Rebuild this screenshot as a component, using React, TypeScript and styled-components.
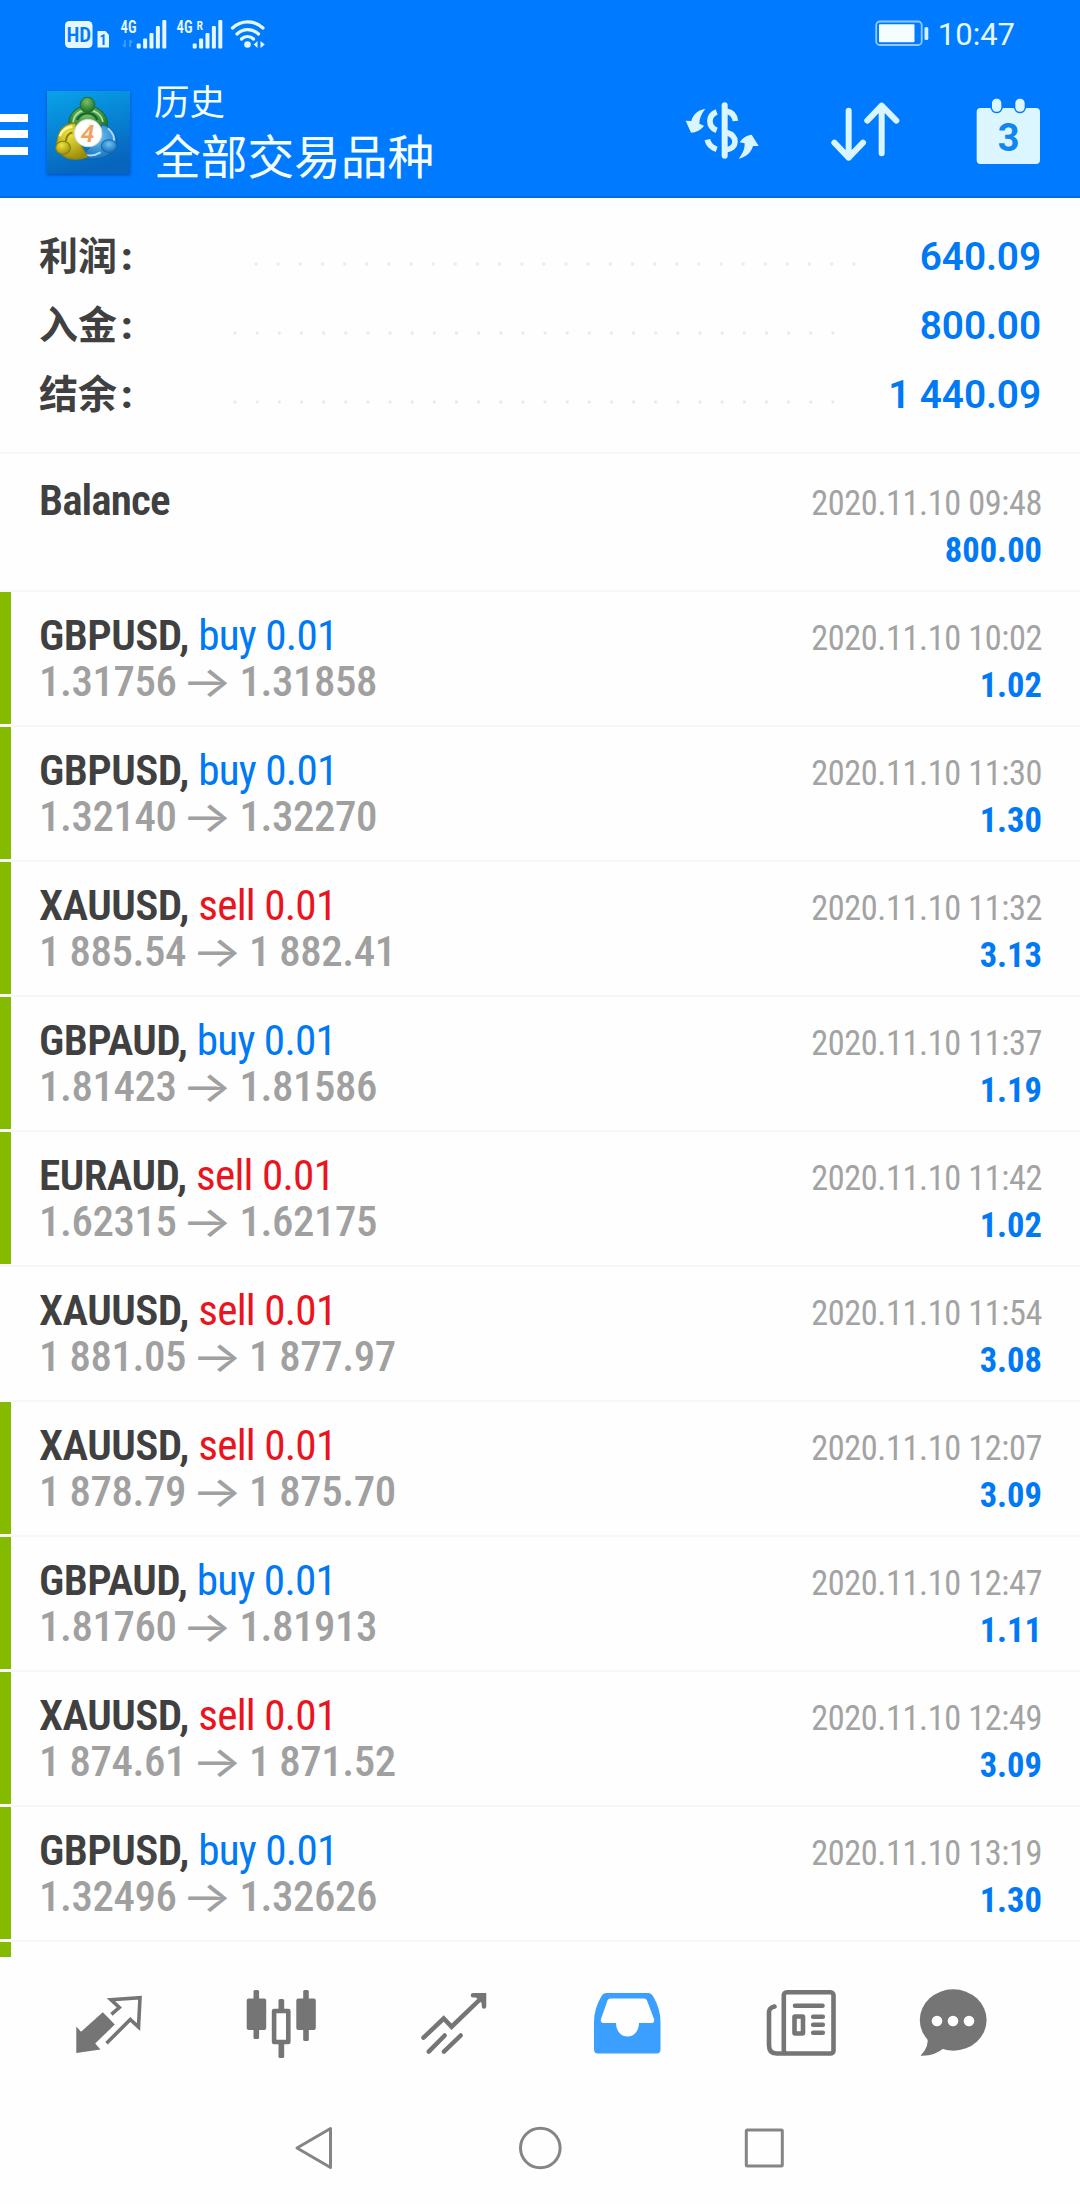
import React from 'react';
import styled, { createGlobalStyle } from 'styled-components';

const condensed = '"Roboto Condensed", Roboto, "Noto Sans CJK SC", sans-serif';
const regular = 'Roboto, "Noto Sans CJK SC", sans-serif';

const color = {
  brand: '#007aff',
  blue: '#0079f5',
  red: '#ea1420',
  ink: '#404040',
  price: '#a0a0a0',
  muted: '#a3a3a3',
  green: '#84bb00',
  line: '#f7f7f7',
  icon: '#757575',
};

const GlobalStyle = createGlobalStyle`
  * { box-sizing: border-box; }
  body { margin: 0; background: #fefefe; }
`;

const Screen = styled.div`
  display: flex;
  flex-direction: column;
  width: 1080px;
  height: 2204px;
  overflow: hidden;
  background: #fefefe;
  font-family: ${regular};
`;

/* ---------- header ---------- */

const StatusBar = styled.div`
  display: flex;
  align-items: center;
  justify-content: space-between;
  flex: none;
  height: 66px;
  padding: 0 65px 0 62px;
  background: ${color.brand};
`;

const StatusRight = styled.div`
  display: flex;
  align-items: center;
  gap: 9px;
`;

const Clock = styled.span`
  color: #e4f7ff;
  font-size: 31px;
  line-height: 37px;
  padding-top: 3px;
`;

const Toolbar = styled.header`
  display: flex;
  align-items: center;
  flex: none;
  height: 132px;
  padding: 8px 34px 0 0;
  background: ${color.brand};
  border-bottom: 2px solid #0068dc;
`;

const MenuButton = styled.div`
  display: flex;
  flex-direction: column;
  gap: 8.5px;
  width: 28px;
  margin-bottom: 2px;
`;

const MenuLine = styled.div`
  height: 8px;
  background: #fff;
`;

const Logo = styled.svg`
  flex: none;
  margin: 0 0 5px 19px;
  box-shadow: 0 1px 3px rgba(0, 40, 140, 0.6);
`;

const Titles = styled.div`
  flex: 1;
  margin: 0 0 3px 24px;
  color: #f4feff;
`;

const Subtitle = styled.div`
  font-size: 35.5px;
  line-height: 50px;
`;

const Title = styled.div`
  font-size: 46.7px;
  line-height: 61px;
`;

const Action = styled.svg<{ $gap?: number }>`
  flex: none;
  height: 90px;
  margin-left: ${(p) => p.$gap ?? 0}px;
`;

/* ---------- summary ---------- */

const Summary = styled.section`
  flex: none;
  height: 256px;
  padding: 24px 39px 0;
  border-bottom: 2px solid ${color.line};
`;

const SummaryRow = styled.div`
  display: flex;
  height: 69px;
  line-height: 69px;
`;

const SummaryLabel = styled.span`
  width: 196px;
  padding-top: 1px;
  color: ${color.ink};
  font-size: 39px;
  font-weight: 700;
`;

const Colon = styled.span`
  margin-left: 4px;
  font-weight: 900;
`;

const Leader = styled.span<{ $start: number; $end: number }>`
  flex: 1;
  height: 4px;
  margin: 40px ${(p) => p.$end}px 0 ${(p) => p.$start}px;
  background: radial-gradient(circle, #eaeaea 0 1.3px, transparent 2px) 0 0 / 22.15px 4px repeat-x;
`;

const SummaryValue = styled.span`
  width: 180px;
  color: ${color.blue};
  font-size: 38.8px;
  letter-spacing: -0.1px;
  font-weight: 600;
  text-align: right;
`;

/* ---------- deals ---------- */

const List = styled.main`
  flex: none;
  height: 1503px;
  padding-top: 3px;
  overflow: hidden;
`;

const Row = styled.article`
  display: flex;
  height: 135px;
  border-bottom: 2px solid ${color.line};
  font-family: ${condensed};
`;

const Marker = styled.div<{ $on?: boolean }>`
  width: 11px;
  height: 132px;
  background: ${(p) => (p.$on ? color.green : 'transparent')};
`;

const Deal = styled.div`
  flex: 1;
  padding: 20px 0 0 28px;
  line-height: 47px;
  white-space: pre;
`;

const Symbol = styled.div<{ $tight?: boolean }>`
  height: 46px;
  color: ${color.ink};
  font-size: 43.2px;
  font-weight: 600;
  letter-spacing: ${(p) => (p.$tight ? -0.95 : -0.55)}px;
`;

const Side = styled.span<{ $sell: boolean }>`
  color: ${(p) => (p.$sell ? color.red : color.blue)};
  font-weight: 400;
  letter-spacing: -0.75px;
`;

const Prices = styled.div`
  display: flex;
  height: 47px;
  color: ${color.price};
  font-size: 42.9px;
  font-weight: 500;
  letter-spacing: -0.45px;
`;

const Arrow = styled.span`
  width: 42px;
  margin: 0 11px 0 10px;
  font-family: Inter, sans-serif;
  font-size: 43px;
  font-weight: 400;
  letter-spacing: 0;
  text-align: center;
  transform: scaleX(1.24);
`;

const Result = styled.div`
  padding: 22px 38px 0 0;
  line-height: 47px;
  text-align: right;
`;

const Time = styled.div`
  height: 48px;
  color: ${color.muted};
  font-size: 34.3px;
  letter-spacing: -0.4px;
  line-height: 48px;
`;

const Profit = styled.div`
  color: ${color.blue};
  font-size: 34.5px;
  font-weight: 700;
`;

/* ---------- bottom bars ---------- */

const Tabs = styled.nav`
  display: grid;
  grid-template-columns: repeat(5, 173px) 132px;
  justify-items: center;
  flex: none;
  height: 143px;
  padding: 26px 0 0 22px;
`;

const SystemBar = styled.div`
  display: flex;
  justify-content: center;
  gap: 176px;
  flex: none;
  padding-top: 24px;
`;

const StatusIcons = () => (
  <svg width="220" height="45" viewBox="62 10 220 45" fill="#e4f7ff">
    <rect x="65" y="20" width="27.5" height="27" rx="4.5" />
    <text x="78.8" y="41.2" fontSize="21" fontWeight="600" fill={color.brand} textAnchor="middle" fontFamily="Roboto Condensed">HD</text>
    <path d="M97.5 30h8l3.500 4v12.500h-11.500z" />
    <text x="103" y="44" fontSize="14" fontWeight="700" fill={color.brand} textAnchor="middle" fontFamily="Roboto Condensed">1</text>
    <text x="120.500" y="32" fontSize="17.500" fontWeight="600" textLength="16" lengthAdjust="spacingAndGlyphs" fontFamily="Roboto Condensed">4G</text>
    <path d="M125 39v7M125 46l-2-2.500M130 46v-7M130 39l2 2.500" stroke="#3f9dff" strokeWidth="1.800" fill="none" />
    {[136.7, 192.7].map((x) => (
      <g key={x}>
        <rect x={x} y="42.500" width="4" height="5" rx="1" />
        <rect x={x + 6.4} y="37.500" width="4" height="10" rx="1" />
        <rect x={x + 12.8} y="32" width="4" height="15.500" rx="1" />
        <rect x={x + 19.2} y="25" width="4" height="22.500" rx="1" />
        <rect x={x + 25.6} y="19" width="4" height="28.500" rx="1" />
      </g>
    ))}
    <text x="176.500" y="32" fontSize="17.500" fontWeight="600" textLength="16" lengthAdjust="spacingAndGlyphs" fontFamily="Roboto Condensed">4G</text>
    <text x="196.500" y="28.500" fontSize="13" fontWeight="600" textLength="6.500" lengthAdjust="spacingAndGlyphs" fontFamily="Roboto Condensed">R</text>
    <g fill="none" stroke="#e4f7ff" strokeWidth="3.200" strokeLinecap="round">
      <path d="M232.500 27a22 22 0 0 1 30.500 0" />
      <path d="M237 33a15.500 15.500 0 0 1 21.500 0" />
      <path d="M241.500 38a8.500 8.500 0 0 1 12 0" />
    </g>
    <circle cx="247.500" cy="43.500" r="3.300" />
    <path d="M257.500 40v7l-3.800-3.500zM260.500 40v7l4.300-3.500z" />
  </svg>
);

const Battery = () => (
  <svg width="54" height="26" viewBox="876 20 54 26">
    <rect x="877.2" y="21.500" width="45.500" height="23.500" rx="3.500" fill="none" stroke="#8fcaff" strokeWidth="1.800" />
    <rect x="880" y="24.300" width="35.500" height="18" rx="1" fill="#f4feff" />
    <rect x="925.500" y="27" width="3.800" height="13" rx="1.500" fill="#d3f0ff" />
  </svg>
);

const AppLogo = () => (
  <Logo width="83" height="83" viewBox="22 33 248 250" preserveAspectRatio="none">
    <defs>
      <linearGradient id="sky" x1="0" y1="0" x2="0.300" y2="1">
        <stop offset="0" stopColor="#08a3ea" />
        <stop offset="1" stopColor="#0765bd" />
      </linearGradient>
      <radialGradient id="leaf" cx="0.450" cy="0.300" r="0.700">
        <stop offset="0" stopColor="#7cc068" />
        <stop offset="1" stopColor="#166e28" />
      </radialGradient>
      <radialGradient id="gold" cx="0.400" cy="0.300" r="0.750">
        <stop offset="0" stopColor="#eee440" />
        <stop offset="1" stopColor="#968a08" />
      </radialGradient>
      <radialGradient id="wave" cx="0.500" cy="0.350" r="0.700">
        <stop offset="0" stopColor="#6cc2f4" />
        <stop offset="1" stopColor="#106ab8" />
      </radialGradient>
    </defs>
    <rect x="22" y="33" width="248" height="250" fill="url(#sky)" />
    <path d="M88 140C82 106 108 78 143 78s64 28 60 64l-20 20h-72z" fill="url(#leaf)" stroke="#14702a" strokeWidth="3" />
    <path d="M100 128c2-24 20-38 43-38s42 14 46 36" fill="none" stroke="#b4e0a4" strokeWidth="5" />
    <path d="M112 120c8-16 20-20 31-20s24 6 30 20" fill="none" stroke="#15692a" strokeWidth="8" />
    <path d="M120 236c28 6 62 4 84-10 22-12 34-40 20-62-7-12-19-27-38-29l-30 60z" fill="url(#wave)" stroke="#0f62ab" strokeWidth="3" />
    <path d="M204 145c14 12 22 28 16 44M132 224c18 6 34 4 50-6" fill="none" stroke="#a4dcfc" strokeWidth="6" />
    <path d="M107 130c-26-2-50 16-54 48-6 22 4 44 28 56 20 8 52 4 62-4l-26-44z" fill="url(#gold)" stroke="#8f8408" strokeWidth="3" />
    <path d="M60 170c6-18 18-28 38-30" fill="none" stroke="#fdfaa0" strokeWidth="7" />
    <path d="M78 184c2-16 10-24 20-26" fill="none" stroke="#8d8108" strokeWidth="6" />
    <ellipse cx="143" cy="75" rx="22" ry="23" fill="url(#leaf)" stroke="#1b7430" strokeWidth="3" />
    <ellipse cx="70" cy="204" rx="22" ry="20" fill="url(#gold)" stroke="#877c0c" strokeWidth="3" />
    <ellipse cx="207" cy="199" rx="23" ry="19" fill="url(#wave)" stroke="#146ab0" strokeWidth="3" />
    <circle cx="145" cy="160" r="41" fill="#fff" stroke="#d6dccf" strokeWidth="3" />
    <text x="143" y="186" fontSize="74" fontWeight="600" fontStyle="italic" fill="#f3a05c" textAnchor="middle" fontFamily="Roboto">4</text>
  </Logo>
);

const CurrencyIcon = () => (
  <Action width="84" viewBox="30 0 252 270" fill="#d9f5ff">
    <path d="M164 46V197" stroke="#d9f5ff" strokeWidth="18" strokeLinecap="round" />
    <g fill="none" stroke="#d9f5ff" strokeWidth="17">
      <path d="M140 66C114 76 112 110 140 121" />
      <path d="M112 149C115 164 126 173 140 178" />
      <path d="M170 64C185 66 194 76 196 93" />
      <path d="M168 127C204 138 204 174 168 180" />
    </g>
    <path d="M106 56C84 60 68 74 64 93L47 92 63 128C78 128 94 119 102 107L88 101C88 85 94 72 106 56Z" />
    <path d="M206 206C230 201 244 186 249 168L266 168 245 134C232 135 218 143 209 157L224 160C224 178 218 190 206 206Z" />
  </Action>
);

const SortIcon = () => (
  <Action $gap={61} width="80" viewBox="465 0 240 270" fill="none" stroke="#d9f5ff" strokeWidth="18" strokeLinecap="round" strokeLinejoin="round">
    <path d="M536 62V203M493 158L536 203 579 158" />
    <path d="M635 190V47M592 92L635 47 679 92" />
  </Action>
);

const CalendarIcon = () => (
  <Action $gap={65} width="76" viewBox="900 0 228 270">
    <path
      d="M932 54h28c4 0 4 16 20 16s16-16 20-16h30c4 0 4 16 20 16s16-16 20-16h28q12 0 12 12v144q0 12-12 12H932q-12 0-12-12V66q0-12 12-12z"
      fill="#dcf6ff"
    />
    <rect x="966" y="26" width="28" height="39" rx="13" fill="#dcf6ff" />
    <rect x="1036" y="26" width="28" height="39" rx="13" fill="#dcf6ff" />
    <text x="1016" y="184" fontSize="114" fontWeight="700" fill="#0f86f2" textAnchor="middle" fontFamily="Roboto">3</text>
  </Action>
);

const Tab = ({ cx, children }: { cx: number; children: React.ReactNode }) => (
  <svg width="80" height="80" viewBox={`${cx - 40} 1983 80 80`} fill={color.icon}>{children}</svg>
);

const TabBar = () => (
  <Tabs>
    <Tab cx={108.5}>
      <path d="M75.800 2053V2026.500L80.500 2031.700 102.300 2012.300 114.300 2024.500 94.700 2043.500 100 2049.500Z" />
      <path d="M110.900 2014.300L118.800 2007.500 110.500 1999.800 139.500 1997.800 138 2027 129.800 2019.500 106 2043.300" fill="none" stroke={color.icon} strokeWidth="3.600" />
    </Tab>
    <Tab cx={281.5}>
      <rect x="246.200" y="1998.500" width="19.500" height="31.500" rx="2" />
      <rect x="253" y="1990" width="5.600" height="49" rx="1.500" />
      <rect x="295.800" y="1998.500" width="19.500" height="31.500" rx="2" />
      <rect x="302.700" y="1990" width="5.600" height="51" rx="1.500" />
      <rect x="273.600" y="2011" width="14.200" height="31" fill="none" stroke={color.icon} strokeWidth="4.600" strokeLinejoin="round" />
      <rect x="278" y="1999" width="5.700" height="12" rx="1.500" />
      <rect x="278" y="2042" width="5.700" height="16" rx="1.500" />
    </Tab>
    <Tab cx={454.5}>
      <g fill="none" stroke={color.icon} strokeWidth="4.500" strokeLinecap="round">
        <path d="M423 2037.700L443.200 2018.500 451.100 2026.700 483 1996" />
        <path d="M428.200 2051.700L444.200 2035.500M443.400 2051.700L460.200 2035.500" />
        <path d="M472.500 1995.300H483.500V2006.500" />
      </g>
      <path d="M473 1995H484V2006Z" />
    </Tab>
    <Tab cx={627.5}>
      <path
        fill="#3a9ffe"
        fillRule="evenodd"
        d="M606 1993H647.500Q651 1993 653 1997 660 2009 660 2022V2049.500Q660 2053.500 656 2053.500H597.500Q593.500 2053.500 593.500 2049.500V2022Q593.500 2009 600.500 1997 602.500 1993 606 1993ZM610 1998.500Q608 1998.500 607 2000.500L600.500 2019Q599.500 2023 603 2023H615.500C615.500 2041 638.500 2041 638.500 2023H650.500Q654.500 2023 653.500 2019L646.500 2000.500Q645.700 1998.500 643.500 1998.500Z"
      />
    </Tab>
    <Tab cx={800.5}>
      <g fill="none" stroke={color.icon} strokeWidth="4.600" strokeLinecap="round">
        <rect x="783.300" y="1992.300" width="49.700" height="61.200" rx="3" />
        <path d="M774 2006.500Q768.500 2008 768.500 2012V2045Q768.500 2053.500 776 2053.500H784" />
        <path d="M794.500 2005.700H822M812.700 2016.700H822.300M812.700 2024.700H822.300M812.700 2032.700H822.300" />
        <rect x="794" y="2016.500" width="8.500" height="17" rx="0.500" />
      </g>
    </Tab>
    <Tab cx={953}>
      <ellipse cx="953.200" cy="2020" rx="33.400" ry="30.700" />
      <path d="M927 2036Q930 2046 920.500 2055.700 934 2056.500 944 2048Z" />
      <g fill="#fff">
        <circle cx="937" cy="2021" r="5.300" />
        <circle cx="953" cy="2021" r="5.300" />
        <circle cx="969" cy="2021" r="5.300" />
      </g>
    </Tab>
  </Tabs>
);

const Navigation = () => (
  <SystemBar>
    <svg width="48" height="48" viewBox="292.500 2124 48 48" fill="none" stroke="#858585" strokeWidth="3" strokeLinejoin="round">
      <path d="M297.500 2148L331 2128.500V2167.500Z" />
    </svg>
    <svg width="48" height="48" viewBox="516 2124 48 48" fill="none" stroke="#858585" strokeWidth="3">
      <circle cx="540.300" cy="2148" r="19.800" />
    </svg>
    <svg width="48" height="48" viewBox="740 2124 48 48" fill="none" stroke="#858585" strokeWidth="3">
      <rect x="746.300" y="2130" width="36" height="36" rx="1" />
    </svg>
  </SystemBar>
);

type DealData = { symbol: string; side: 'buy' | 'sell'; from: string; to: string; time: string; profit: string; marked: boolean };

const deals: DealData[] = [
  { symbol: 'GBPUSD', side: 'buy', from: '1.31756', to: '1.31858', time: '10:02', profit: '1.02', marked: true },
  { symbol: 'GBPUSD', side: 'buy', from: '1.32140', to: '1.32270', time: '11:30', profit: '1.30', marked: true },
  { symbol: 'XAUUSD', side: 'sell', from: '1 885.54', to: '1 882.41', time: '11:32', profit: '3.13', marked: true },
  { symbol: 'GBPAUD', side: 'buy', from: '1.81423', to: '1.81586', time: '11:37', profit: '1.19', marked: true },
  { symbol: 'EURAUD', side: 'sell', from: '1.62315', to: '1.62175', time: '11:42', profit: '1.02', marked: true },
  { symbol: 'XAUUSD', side: 'sell', from: '1 881.05', to: '1 877.97', time: '11:54', profit: '3.08', marked: false },
  { symbol: 'XAUUSD', side: 'sell', from: '1 878.79', to: '1 875.70', time: '12:07', profit: '3.09', marked: true },
  { symbol: 'GBPAUD', side: 'buy', from: '1.81760', to: '1.81913', time: '12:47', profit: '1.11', marked: true },
  { symbol: 'XAUUSD', side: 'sell', from: '1 874.61', to: '1 871.52', time: '12:49', profit: '3.09', marked: true },
  { symbol: 'GBPUSD', side: 'buy', from: '1.32496', to: '1.32626', time: '13:19', profit: '1.30', marked: true },
];

const totals = [
  { label: '利润', value: '640.09', start: 10, end: 4 },
  { label: '入金', value: '800.00', start: -11, end: 24 },
  { label: '结余', value: '1 440.09', start: -11, end: 24 },
];

export default function App() {
  return (
    <Screen>
      <GlobalStyle />
      <StatusBar>
        <StatusIcons />
        <StatusRight>
          <Battery />
          <Clock>10:47</Clock>
        </StatusRight>
      </StatusBar>
      <Toolbar>
        <MenuButton>
          <MenuLine />
          <MenuLine />
          <MenuLine />
        </MenuButton>
        <AppLogo />
        <Titles>
          <Subtitle>历史</Subtitle>
          <Title>全部交易品种</Title>
        </Titles>
        <CurrencyIcon />
        <SortIcon />
        <CalendarIcon />
      </Toolbar>
      <Summary>
        {totals.map((t) => (
          <SummaryRow key={t.label}>
            <SummaryLabel>
              {t.label}
              <Colon>:</Colon>
            </SummaryLabel>
            <Leader $start={t.start} $end={t.end} />
            <SummaryValue>{t.value}</SummaryValue>
          </SummaryRow>
        ))}
      </Summary>
      <List>
        <Row>
          <Marker />
          <Deal>
            <Symbol $tight>Balance</Symbol>
          </Deal>
          <Result>
            <Time>2020.11.10 09:48</Time>
            <Profit>800.00</Profit>
          </Result>
        </Row>
        {deals.map((d) => (
          <Row key={d.time}>
            <Marker $on={d.marked} />
            <Deal>
              <Symbol>
                {d.symbol}, <Side $sell={d.side === 'sell'}>{d.side} 0.01</Side>
              </Symbol>
              <Prices>
                {d.from}
                <Arrow>→</Arrow>
                {d.to}
              </Prices>
            </Deal>
            <Result>
              <Time>2020.11.10 {d.time}</Time>
              <Profit>{d.profit}</Profit>
            </Result>
          </Row>
        ))}
        <Row>
          <Marker $on />
        </Row>
      </List>
      <TabBar />
      <Navigation />
    </Screen>
  );
}
